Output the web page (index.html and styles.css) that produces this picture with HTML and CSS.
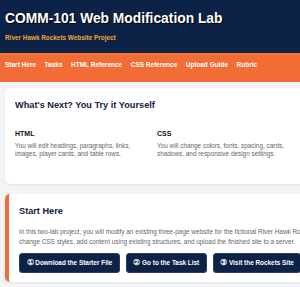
FILE: index.html
```html
<!DOCTYPE html>
<html lang="en">
<head>
<meta charset="utf-8">
<title>COMM-101 Web Modification Lab</title>
<link rel="stylesheet" href="styles.css">
</head>
<body>
<header class="site-header">
  <h1 class="site-title">COMM-101 Web Modification Lab</h1>
  <p class="site-subtitle">River Hawk Rockets Website Project</p>
</header>
<nav class="site-nav">
  <a href="#start">Start Here</a>
  <a href="#tasks">Tasks</a>
  <a href="#html">HTML Reference</a>
  <a href="#css">CSS Reference</a>
  <a href="#upload">Upload Guide</a>
  <a href="#rubric">Rubric</a>
</nav>
<main class="page">
  <section class="card">
    <h2 class="card-title">What's Next? You Try it Yourself</h2>
    <div class="two-col">
      <div class="col">
        <h3 class="col-title">HTML</h3>
        <p class="col-text">You will edit headings, paragraphs, links, images, player cards, and table rows.</p>
      </div>
      <div class="col">
        <h3 class="col-title">CSS</h3>
        <p class="col-text">You will change colors, fonts, spacing, cards, shadows, and responsive design settings.</p>
      </div>
    </div>
  </section>
  <section class="card card-accent" id="start">
    <h2 class="card-title">Start Here</h2>
    <p class="intro">In this two-lab project, you will modify an existing three-page website for the fictional River Hawk Rockets team. You will edit HTML content,<br>change CSS styles, add content using existing structures, and upload the finished site to a server.</p>
    <div class="buttons">
      <a class="btn" href="#download"><span class="num">&#9312;</span> Download the Starter File</a>
      <a class="btn" href="#tasks"><span class="num">&#9313;</span> Go to the Task List</a>
      <a class="btn" href="#site"><span class="num">&#9314;</span> Visit the Rockets Site</a>
    </div>
  </section>
</main>
</body>
</html>
```
FILE: styles.css
```css
html, body {
  margin: 0;
  padding: 0;
  overflow: hidden;
}
body {
  background: #f3f4f6;
  font-family: "Liberation Sans", Arial, sans-serif;
  color: #222;
  width: 560px;
}
.site-header {
  background: #0c2246;
  padding: 11px 5px 11px;
  border-bottom: 2px solid #f7763a;
}
.site-title {
  margin: 0;
  color: #fff;
  font-size: 13.8px;
  line-height: 16px;
  font-weight: 700;
  text-shadow: 1px 1px 1px #000;
}
.site-subtitle {
  margin: 7px 0 0;
  color: #f5a23a;
  font-size: 6.4px;
  line-height: 8px;
  font-weight: 700;
}
.site-nav {
  background: #f26d35;
  display: flex;
  gap: 8.5px;
  padding: 6px 5px 13px;
}
.site-nav a {
  color: #fff;
  text-decoration: none;
  font-weight: 700;
  font-size: 6.5px;
  line-height: 8px;
}
.page {
  padding: 6px 5px;
}
.card {
  background: #fff;
  border-radius: 5px;
  box-shadow: 0 1px 3px rgba(0,0,0,0.08);
  padding: 12px 10px 26px;
  margin-bottom: 10px;
}
.card-title {
  margin: 0;
  color: #14213d;
  font-size: 9.2px;
  line-height: 11px;
  font-weight: 700;
}
.two-col {
  display: grid;
  grid-template-columns: 130px 130px;
  gap: 12px;
  margin-top: 19px;
}
.col-title {
  margin: 0 0 4px;
  font-size: 7px;
  line-height: 8px;
  color: #111;
}
.col-text {
  margin: 0;
  font-size: 6.4px;
  line-height: 8px;
  color: #666;
}
.card-accent {
  border-left: 4px solid #f26d35;
  padding: 12px 10px 9px;
}
.intro {
  margin: 10px 0 0;
  font-size: 6.4px;
  line-height: 10px;
  color: #666;
}
.buttons {
  display: flex;
  gap: 6px;
  margin-top: 6px;
}
.btn {
  background: #0c2246;
  color: #fff;
  text-decoration: none;
  font-weight: 700;
  font-size: 6.4px;
  line-height: 18px;
  padding: 0 6.5px;
  border-radius: 3px;
  border: 1px solid #2b3f63;
}
.num {
  font-size: 7.6px;
}
```
